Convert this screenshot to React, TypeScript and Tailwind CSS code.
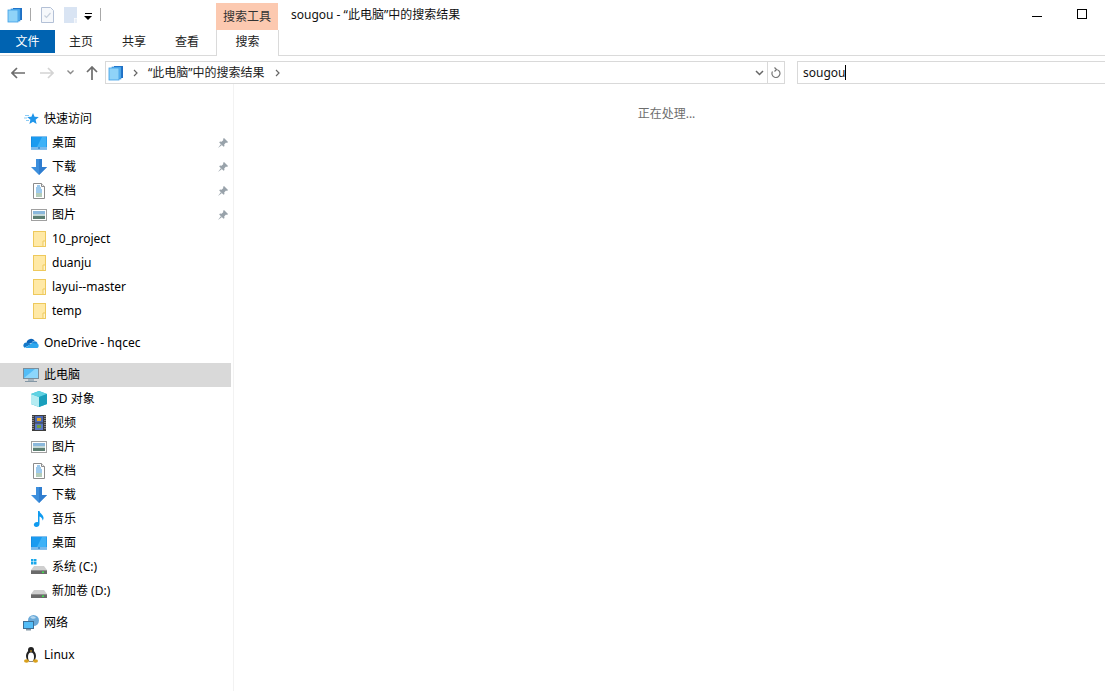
import { ReactNode } from "react";

const FolderStack = ({ size = 16 }: { size?: number }) => (
  <svg width={size} height={size} viewBox="0 0 16 16">
    <rect x="6" y="1" width="9" height="12" fill="#1f6fc4" />
    <rect x="4" y="2" width="9" height="12" fill="#5fb4ee" stroke="#2a86d6" strokeWidth="0.6" />
    <rect x="1" y="3" width="10" height="12" fill="#8fd3f8" stroke="#3c9fe6" strokeWidth="0.8" />
  </svg>
);

const Desktop = () => (
  <svg width="16" height="14" viewBox="0 0 16 14">
    <rect width="16" height="13" y="0.5" fill="#0f7fd8" />
    <rect x="0.5" y="1" width="15" height="10" fill="#1a9bf0" />
    <path d="M11 1h4.5v10H6z" fill="#3fb2f7" />
    <rect y="11.5" width="16" height="1" fill="#e8f6ff" />
    <rect x="7" y="11.5" width="2" height="1" fill="#0f6fc0" />
  </svg>
);

const Download = () => (
  <svg width="16" height="16" viewBox="0 0 16 16">
    <path d="M5 0h6v8h5l-8 8-8-8h5z" fill="#3d8fdd" />
    <path d="M8 0h3v8h5l-8 8z" fill="#2f7dcf" />
  </svg>
);

const Doc = () => (
  <svg width="12" height="16" viewBox="0 0 12 16">
    <path d="M.5.5h8l3 3v12H.5z" fill="#fff" stroke="#8c8c8c" />
    <path d="M8.5.5v3h3" fill="#eee" stroke="#8c8c8c" />
    <path d="M4 3h3M3 5h5M3 7h6M3 9h6" stroke="#3b93d8" />
    <path d="M3 11h6M3 13h6" stroke="#6b9b78" />
  </svg>
);

const Picture = () => (
  <svg width="16" height="12" viewBox="0 0 16 12">
    <rect x="0.5" y="0.5" width="15" height="11" fill="#fff" stroke="#a0a0a0" />
    <rect x="2" y="2" width="12" height="3.5" fill="#8bb8dc" />
    <rect x="2" y="5" width="12" height="2" fill="#c4d8d8" />
    <rect x="2" y="7" width="12" height="3" fill="#5d7f72" />
  </svg>
);

const Pin = () => (
  <svg width="10" height="10" viewBox="0 0 10 10">
    <path d="M6 0l4 4-1 1-1-.4L6.2 6.4 6.5 8 5.6 8.8 1.2 4.4 2 3.5l1.6.3L5.4 2 5 1z" fill="#98a2aa" />
    <path d="M3 6L0 10l4-3z" fill="#98a2aa" />
  </svg>
);

const Folder = () => (
  <svg width="13" height="16" viewBox="0 0 13 16">
    <rect x="0.5" y="0.5" width="12" height="15" fill="#ffe9a6" stroke="#eec95c" />
    <path d="M10 10h2.5v5.5H10z" fill="#fff3cc" stroke="#eec95c" />
  </svg>
);

const Star = () => (
  <svg width="15" height="14" viewBox="0 0 15 14">
    <path d="M9 1l1.6 3.8 4.2.3-3.2 2.7 1 4.2L9 9.8 5.4 12l1-4.2L3.2 5.1l4.2-.3z" fill="#1f95ea" />
    <path d="M1 3.5h4M0 6h3M2 8.5h3" stroke="#8ccbf4" />
  </svg>
);

const Cloud = () => (
  <svg width="16" height="10" viewBox="0 0 16 10">
    <path d="M3.5 4.5a4.5 4.5 0 0 1 8.3-1.4 3 3 0 0 0-3.2 2L5.500 6z" fill="#0c64b8" />
    <path d="M8.600 5a3.300 3.300 0 0 1 6 .2l-.8 1-4 .3z" fill="#1a86d8" />
    <path d="M3.200 4.400A3 3 0 0 0 1.500 9.700L8 6.200z" fill="#1479c9" />
    <path d="M2 10h11.500c2 0 3-2.800 1.300-4.200L9 5z" fill="#2da7ee" />
  </svg>
);

const Computer = () => (
  <svg width="16" height="15" viewBox="0 0 16 15">
    <rect x="0.5" y="0.5" width="15" height="10" fill="#53bdf7" stroke="#7a8d9b" />
    <path d="M1 10L12 1h3v9z" fill="#8cd6fb" />
    <rect x="5" y="11" width="6" height="2" fill="#a5b4be" />
    <rect x="2" y="13" width="12" height="1" fill="#8497a5" />
  </svg>
);

const Cube = () => (
  <svg width="16" height="16" viewBox="0 0 16 16">
    <path d="M8 0l8 3v10l-8 3-8-3V3z" fill="#2bb5cd" />
    <path d="M0 3l8 3v10l-8-3z" fill="#b5ecf2" />
    <path d="M8 0l8 3-8 3-8-3z" fill="#5fd2e2" />
    <path d="M8 6l8-3v10l-8 3z" fill="#1a9fbc" />
  </svg>
);

const Film = () => (
  <svg width="14" height="16" viewBox="0 0 14 16">
    <rect width="14" height="16" fill="#3d3d3d" />
    <path d="M1 1v14M13 1v14" stroke="#d0d0d0" strokeDasharray="1 1" />
    <rect x="3" y="1" width="8" height="6.500" fill="#4b68b4" />
    <rect x="3" y="8.500" width="8" height="6.500" fill="#5a78c4" />
    <rect x="5" y="3" width="4" height="3" fill="#e0a428" />
    <rect x="5" y="10" width="4" height="3" fill="#70a040" />
  </svg>
);

const Music = () => (
  <svg width="12" height="16" viewBox="0 0 12 16">
    <path d="M5 0h1.500c.3 2.500 3.500 3.500 4 6.500.2 1.200-.3 2.500-1 3 .2-2-1.500-3.500-3-4V13c0 1.800-1.500 3-3.300 3C1.800 16 .8 15 .8 13.800.800 12.200 2.500 11 4 11c.4 0 .7 0 1 .2z" fill="#0f9bf0" />
  </svg>
);

const Drive = ({ win = false }: { win?: boolean }) => (
  <svg width="16" height="16" viewBox="0 0 16 16">
    {win && <path d="M0 0h2.500v2.500H0zM3 0h2.500v2.500H3zM0 3h2.500v2.500H0zM3 3h2.500v2.500H3z" fill="#18a7ea" />}
    <path d="M3 7h10l3 4H0z" fill="#cfcfcf" />
    <rect y="11" width="16" height="4" fill="#6a6a6a" />
    <rect x="0" y="11" width="16" height="1" fill="#8e8e8e" />
    <rect x="11" y="12.500" width="2" height="1.500" fill="#3fe04a" />
  </svg>
);

const Network = () => (
  <svg width="16" height="16" viewBox="0 0 16 16">
    <circle cx="10.500" cy="5.500" r="5.500" fill="#6aa9d8" />
    <path d="M7 2c2-1.500 5-1 6 1-1.500 1-4 1.500-6-1z" fill="#b6d8ef" />
    <rect x="0.500" y="6.500" width="10" height="7" fill="#53bdf7" stroke="#3d6f96" />
    <rect x="3" y="14" width="5" height="1.500" fill="#8497a5" />
  </svg>
);

const Penguin = () => (
  <svg width="14" height="16" viewBox="0 0 14 16">
    <ellipse cx="7" cy="9" rx="5" ry="6" fill="#222" />
    <circle cx="7" cy="3" r="3" fill="#222" />
    <ellipse cx="7" cy="10" rx="3" ry="4.500" fill="#fff" />
    <rect x="6" y="3.500" width="2" height="1" fill="#e2a820" />
    <ellipse cx="2.500" cy="14" rx="2.500" ry="1.800" fill="#d9a01c" />
    <ellipse cx="11.500" cy="14" rx="2.500" ry="1.800" fill="#d9a01c" />
  </svg>
);

const CheckDoc = () => (
  <svg width="13" height="16" viewBox="0 0 13 16">
    <path d="M.5.5h9l3 3v12H.5z" fill="#f6f8fb" stroke="#b3c0d6" />
    <path d="M3.500 8.500l2 2 4-4.500" fill="none" stroke="#c6cfdc" strokeWidth="1.200" />
  </svg>
);

const BlankDoc = () => (
  <svg width="13" height="16" viewBox="0 0 13 16">
    <path d="M0 0h13v11h-3v5H0z" fill="#d9e4f3" />
    <path d="M10.500 11.500H13V16h-2.500z" fill="#e8eef7" />
  </svg>
);

function Row({ icon, label, indent = false, pin = false, selected = false }: { icon: ReactNode; label: string; indent?: boolean; pin?: boolean; selected?: boolean }) {
  return (
    <div className={`flex h-6 w-[231px] items-center ${selected ? "bg-[#d9d9d9]" : ""} ${indent ? "pl-[31px]" : "pl-[23px]"}`}>
      <div className="flex w-4 shrink-0 items-center justify-center">{icon}</div>
      <span className={`whitespace-nowrap text-[12px] text-[#000] ${indent ? "ml-[5px]" : "ml-[5px]"}`}>{label}</span>
      {pin && (
        <span className="ml-auto mr-[3px] flex">
          <Pin />
        </span>
      )}
    </div>
  );
}

export default function App() {
  return (
    <div className="flex h-[691px] w-[1105px] flex-col overflow-hidden bg-white font-['Noto_Sans','Noto_Sans_CJK_SC',sans-serif] text-[12px] leading-none text-black">
      {/* title bar */}
      <div className="flex h-[30px] items-start">
        <div className="mt-[7px] ml-[7px] flex">
          <FolderStack />
        </div>
        <div className="mt-[8px] ml-[7px] h-[13px] w-px bg-[#a8a8a8]" />
        <div className="mt-[7px] ml-[10px] flex">
          <CheckDoc />
        </div>
        <div className="mt-[7px] ml-[10px] flex">
          <BlankDoc />
        </div>
        <div className="mt-[13px] ml-[7px] flex w-[8px] flex-col items-center gap-[2px]">
          <div className="h-px w-[7px] bg-black" />
          <div className="h-0 w-0 border-x-[4px] border-t-[4px] border-x-transparent border-t-black" />
        </div>
        <div className="mt-[8px] ml-[8px] h-[13px] w-px bg-[#a8a8a8]" />
        <div className="mt-[3px] ml-[115px] flex h-[27px] w-[62px] items-center justify-center bg-[#fcc9b0] text-[12px] text-[#333]">搜索工具</div>
        <div className="ml-[13px] mt-[8px] text-[12px] leading-[14px] text-[#111]">sougou - “此电脑”中的搜索结果</div>
        <div className="ml-auto mr-[18px] flex items-center">
          <div className="mt-[14px] h-px w-[10px] bg-black" />
          <div className="mt-[9px] ml-[35px] h-[10px] w-[10px] border border-black" />
        </div>
      </div>

      {/* ribbon tabs */}
      <div className="flex h-[26px] items-start border-b border-[#dadada] text-[12px] text-[#222]">
        <div className="flex h-[23px] w-[55px] items-center justify-center bg-[#0063b1] text-white">文件</div>
        <div className="flex h-[23px] w-[52px] items-center justify-center">主页</div>
        <div className="flex h-[23px] w-[54px] items-center justify-center">共享</div>
        <div className="flex h-[23px] w-[52px] items-center justify-center">查看</div>
        <div className="ml-[3px] flex h-[26px] w-[63px] items-center justify-center border-x border-[#dadada] bg-white pb-[3px]">搜索</div>
      </div>

      {/* nav bar */}
      <div className="flex h-[28px] items-end pl-[11px]">
        <svg width="14" height="12" viewBox="0 0 14 12" className="mb-[5px]">
          <path d="M6 1L1 6l5 5M1 6h13" fill="none" stroke="#6d6d6d" strokeWidth="1.700" />
        </svg>
        <svg width="14" height="12" viewBox="0 0 14 12" className="mb-[5px] ml-[15px]">
          <path d="M8 1l5 5-5 5M13 6H0" fill="none" stroke="#d4d4d4" strokeWidth="1.700" />
        </svg>
        <svg width="7" height="5" viewBox="0 0 7 5" className="mb-[9px] ml-[13px]">
          <path d="M.5 .5L3.500 3.500 6.500 .5" fill="none" stroke="#8a8a8a" strokeWidth="1.400" />
        </svg>
        <svg width="12" height="14" viewBox="0 0 12 14" className="mb-[4px] ml-[12px]">
          <path d="M1 6l5-5 5 5M6 1v13" fill="none" stroke="#6d6d6d" strokeWidth="1.700" />
        </svg>
        <div className="ml-[7px] flex h-[23px] w-[680px] items-center border border-[#d9d9d9]">
          <div className="ml-[2px] flex">
            <FolderStack />
          </div>
          <svg width="5" height="8" viewBox="0 0 5 8" className="ml-[9px]">
            <path d="M1 1l3 3-3 3" fill="none" stroke="#666" strokeWidth="1.200" />
          </svg>
          <span className="ml-[10px] text-[12px] text-[#222]">“此电脑”中的搜索结果</span>
          <svg width="5" height="8" viewBox="0 0 5 8" className="ml-[10px]">
            <path d="M1 1l3 3-3 3" fill="none" stroke="#666" strokeWidth="1.200" />
          </svg>
          <svg width="9" height="6" viewBox="0 0 9 6" className="ml-auto mr-[3px]">
            <path d="M1 1l3.500 3.500L8 1" fill="none" stroke="#666" strokeWidth="1.500" />
          </svg>
          <div className="flex h-full w-[17px] items-center justify-center border-l border-[#d9d9d9]">
            <svg width="10" height="12" viewBox="0 0 10 12">
              <path d="M5 2.500a4 4 0 1 1-3.500 2M3.500 0.500l2 2-2 2" fill="none" stroke="#777" strokeWidth="1.200" />
            </svg>
          </div>
        </div>
        <div className="ml-[12px] flex h-[23px] flex-1 items-center border border-r-0 border-[#d9d9d9] pl-[5px]">
          <span className="text-[12px] text-[#111]">sougou</span>
          <div className="h-[15px] w-px bg-black" />
        </div>
      </div>

      {/* body */}
      <div className="flex flex-1">
        <div className="w-[234px] shrink-0 border-r border-[#f2f2f2] pt-[23px]">
          <Row icon={<Star />} label="快速访问" />
          <Row indent pin icon={<Desktop />} label="桌面" />
          <Row indent pin icon={<Download />} label="下载" />
          <Row indent pin icon={<Doc />} label="文档" />
          <Row indent pin icon={<Picture />} label="图片" />
          <Row indent icon={<Folder />} label="10_project" />
          <Row indent icon={<Folder />} label="duanju" />
          <Row indent icon={<Folder />} label="layui--master" />
          <Row indent icon={<Folder />} label="temp" />
          <div className="h-2" />
          <Row icon={<Cloud />} label="OneDrive - hqcec" />
          <div className="h-2" />
          <Row selected icon={<Computer />} label="此电脑" />
          <Row indent icon={<Cube />} label="3D 对象" />
          <Row indent icon={<Film />} label="视频" />
          <Row indent icon={<Picture />} label="图片" />
          <Row indent icon={<Doc />} label="文档" />
          <Row indent icon={<Download />} label="下载" />
          <Row indent icon={<Music />} label="音乐" />
          <Row indent icon={<Desktop />} label="桌面" />
          <Row indent icon={<Drive win />} label="系统 (C:)" />
          <Row indent icon={<Drive />} label="新加卷 (D:)" />
          <div className="h-2" />
          <Row icon={<Network />} label="网络" />
          <div className="h-2" />
          <Row icon={<Penguin />} label="Linux" />
        </div>
        <div className="flex flex-1 justify-center pt-[24px] pr-[6px] text-[12px] text-[#6d6d6d]">
          <span>正在处理...</span>
        </div>
      </div>
    </div>
  );
}
